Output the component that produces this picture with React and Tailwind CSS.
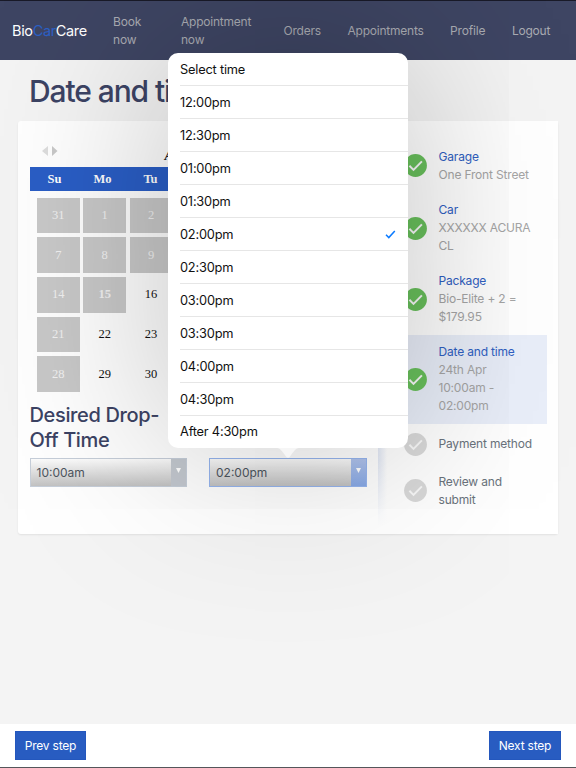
import { useState } from 'react';
import clsx from 'clsx';

const times = [
  'Select time',
  '12:00pm',
  '12:30pm',
  '01:00pm',
  '01:30pm',
  '02:00pm',
  '02:30pm',
  '03:00pm',
  '03:30pm',
  '04:00pm',
  '04:30pm',
  'After 4:30pm',
];

const weekDays = ['Su', 'Mo', 'Tu', 'We', 'Th', 'Fr', 'Sa'];

const weeks = [
  [31, 1, 2, 3, 4, 5, 6],
  [7, 8, 9, 10, 11, 12, 13],
  [14, 15, 16, 17, 18, 19, 20],
  [21, 22, 23, 24, 25, 26, 27],
  [28, 29, 30, 1, 2, 3, 4],
];

const steps = [
  { title: 'Garage', lines: ['One Front Street'], done: true },
  { title: 'Car', lines: ['XXXXXX ACURA', 'CL'], done: true },
  { title: 'Package', lines: ['Bio-Elite + 2 =', '$179.95'], done: true },
  { title: 'Date and time', lines: ['24th Apr', '10:00am -', '02:00pm'], done: true, active: true },
  { title: 'Payment method', lines: [] },
  { title: 'Review and submit', lines: [] },
];

// Sundays and everything up to today (the 15th) can't be booked
const isDisabled = (week, day) => day === 0 || week < 2 || (week === 2 && day === 1);

const Header = () => (
  <header className="flex h-[60px] shrink-0 items-center border-t border-[#191a28] bg-[#3e4563] pt-px text-[12px] leading-[18px] text-[#a9abb2]">
    <div className="ml-3 w-[101px] text-[14.5px] tracking-[-0.35px] text-white">
      Bio<span className="text-[#2c60c6]">Car</span>Care
    </div>
    <a className="w-[68px] pr-6 tracking-[-0.15px]">Book now</a>
    <a className="w-[102.5px] pr-6 tracking-[-0.22px]">Appointment now</a>
    <a className="w-[64px] tracking-[-0.2px]">Orders</a>
    <a className="w-[102.5px] tracking-[-0.22px]">Appointments</a>
    <a className="w-[62px] tracking-[-0.15px]">Profile</a>
    <a className="tracking-[-0.25px]">Logout</a>
  </header>
);

const Calendar = () => (
  <div className="font-['Liberation_Serif',serif]">
    <div className="flex h-[34px] items-start pl-3 pt-[13px]">
      <svg width="16" height="10" viewBox="0 0 16 10">
        <path d="M6 0v10L0 5z" fill="#dedede" />
        <path d="M10 0v10l5.5-5z" fill="#c9c9c9" />
      </svg>
      <div className="flex-1 pr-[34px] text-center text-[14px] font-bold italic leading-5 text-[#222]">April 2019</div>
    </div>
    <div className="grid h-6 grid-cols-7 items-center bg-[#2a5ec6] pl-[1px] text-center text-[12.5px] font-bold text-white">
      {weekDays.map((d) => (
        <div key={d}>{d}</div>
      ))}
    </div>
    <div className="ml-[7.5px] mr-[8.5px] mt-[6.5px] grid grid-cols-7 gap-x-[3.8px] gap-y-[3.8px] text-[12.5px]">
      {weeks.map((week, w) =>
        week.map((date, d) => (
          <div
            key={`${w}-${d}`}
            className={clsx(
              'flex h-[35.9px] items-center justify-center',
              isDisabled(w, d) ? 'bg-[#c9c9c9] text-[#f1f1f1]' : 'text-[#111]',
              w === 2 && d === 1 && 'font-bold',
            )}
          >
            {date}
          </div>
        )),
      )}
    </div>
  </div>
);

const SelectBox = ({ value, focused, onClick }) => (
  <button
    onClick={onClick}
    className={clsx(
      'flex h-[29px] w-full border text-left text-[12px] text-[#4d555e]',
      focused ? 'border-[#96b5ee]' : 'border-[#c6ced9]',
    )}
  >
    <span className="flex h-full flex-1 items-center bg-linear-to-b from-[#fcfcfc] to-[#c2c2c2] pl-1.5 pt-px">{value}</span>
    <span
      className={clsx(
        'flex h-full w-[15px] justify-center pt-[9px]',
        focused ? 'bg-linear-to-b from-[#b0c3ec] to-[#88a9e6]' : 'bg-[#c3c8cf]',
      )}
    >
      <svg width="5" height="5" viewBox="0 0 5 5">
        <path d="M0 0h5L2.5 5z" fill="#fff" />
      </svg>
    </span>
  </button>
);

const StepIcon = ({ done }) => (
  <svg className="shrink-0" width="23" height="23" viewBox="0 0 23 23">
    <circle cx="11.5" cy="11.5" r="11.4" fill={done ? '#69c05c' : '#d9d9d9'} />
    <path d="M5.4 11.8l4.1 4.1 8.4-8.5" fill="none" stroke="#f8f8f8" strokeWidth="2" />
  </svg>
);

const Sidebar = () => (
  <aside className="w-[180px] bg-[linear-gradient(to_bottom,transparent_82%,white_98%),linear-gradient(to_right,#e3e9f6,white_5%)] pl-[14px] pr-[11.5px] pt-[18.3px]">
    {steps.map(({ title, lines, done, active }) => (
      <div
        key={title}
        className={clsx('flex items-center py-[8.6px] pl-3', active && 'bg-[#e9eef9]')}
      >
        <StepIcon done={done} />
        <div className="ml-[11.5px] text-[12px] leading-[18px] tracking-[-0.18px] text-[#a5a5a5]">
          <div className={clsx(done ? 'text-[#2f60c2]' : 'text-[#6a737c]', title.startsWith('Review') && 'w-20')}>{title}</div>
          {lines.map((line) => (
            <div key={line} className="whitespace-nowrap">{line}</div>
          ))}
        </div>
      </div>
    ))}
  </aside>
);

const TimeMenu = ({ value, onSelect }) => (
  <div className="absolute left-[168px] top-[53px] w-[240px] rounded-[10px] bg-white shadow-[0_0_190px_rgba(0,0,0,0.26)]">
    <ul className="pl-3">
      {times.map((time, i) => (
        <li
          key={time}
          onClick={() => onSelect(time)}
          className={clsx(
            'flex items-center justify-between pr-3 text-[12.8px] tracking-[-0.2px] text-[#111]',
            i < times.length - 1 ? 'h-[33px] border-b border-[#e6e6e6] pt-px' : 'h-8',
          )}
        >
          {time}
          {time === value && (
            <svg width="11" height="9" viewBox="0 0 11 9">
              <path d="M1 4.8l2.8 2.8L9.8 1" fill="none" stroke="#0a7aff" strokeWidth="1.5" />
            </svg>
          )}
        </li>
      ))}
    </ul>
    <svg className="absolute left-[109px] top-full" width="22" height="11" viewBox="0 0 22 11">
      <path d="M0 0h22c-3 0-5 3-9 8.5q-2 2.6-4 0C5 3 3 0 0 0z" fill="#f6f6f6" />
    </svg>
  </div>
);

const App = () => {
  const [time, setTime] = useState('02:00pm');
  const [open, setOpen] = useState(true);

  const handleSelect = (value) => {
    setTime(value);
    setOpen(false);
  };

  return (
    <div className="relative flex h-[768px] w-[576px] flex-col overflow-hidden bg-[#f4f4f4] font-['Inter',sans-serif]">
      <Header />
      <main className="flex-1 px-[18px]">
        <h1 className="ml-[11px] pt-[11px] text-[30px] font-medium leading-10 tracking-[-1.1px] text-[#3c4364]">Date and time</h1>
        <section className="mt-[10px] flex h-[413px] rounded-[3px] bg-white shadow-[0_1px_2px_rgba(0,0,0,0.08)]">
          <div className="w-[360px] pl-[11.5px] pr-[11.5px] pt-3">
            <Calendar />
            <div className="mt-[10.5px] grid grid-cols-2 gap-[22px]">
              <div>
                <h2 className="mb-[5px] h-[50px] text-[20px] font-medium leading-[25px] tracking-[-0.35px] text-[#3c4364]">Desired Drop-Off Time</h2>
                <SelectBox value="10:00am" />
              </div>
              <div>
                <h2 className="mb-[5px] h-[50px] text-[20px] font-medium leading-[25px] tracking-[-0.35px] text-[#3c4364]">Desired Pick-Up Time</h2>
                <SelectBox value={time} focused={open} onClick={() => setOpen(!open)} />
              </div>
            </div>
          </div>
          <Sidebar />
        </section>
      </main>
      {open && <TimeMenu value={time} onSelect={handleSelect} />}
      <footer className="relative flex h-11 shrink-0 items-center justify-between border-b border-[#55565a] bg-white px-[15px]">
        <button className="h-[29px] w-[71px] border border-[#2457bd] bg-[#285cc1] text-[12px] tracking-[-0.2px] text-white">Prev step</button>
        <button className="h-[29px] w-[72px] border border-[#2457bd] bg-[#285cc1] text-[12px] tracking-[-0.2px] text-white">Next step</button>
      </footer>
    </div>
  );
};

export default App;
